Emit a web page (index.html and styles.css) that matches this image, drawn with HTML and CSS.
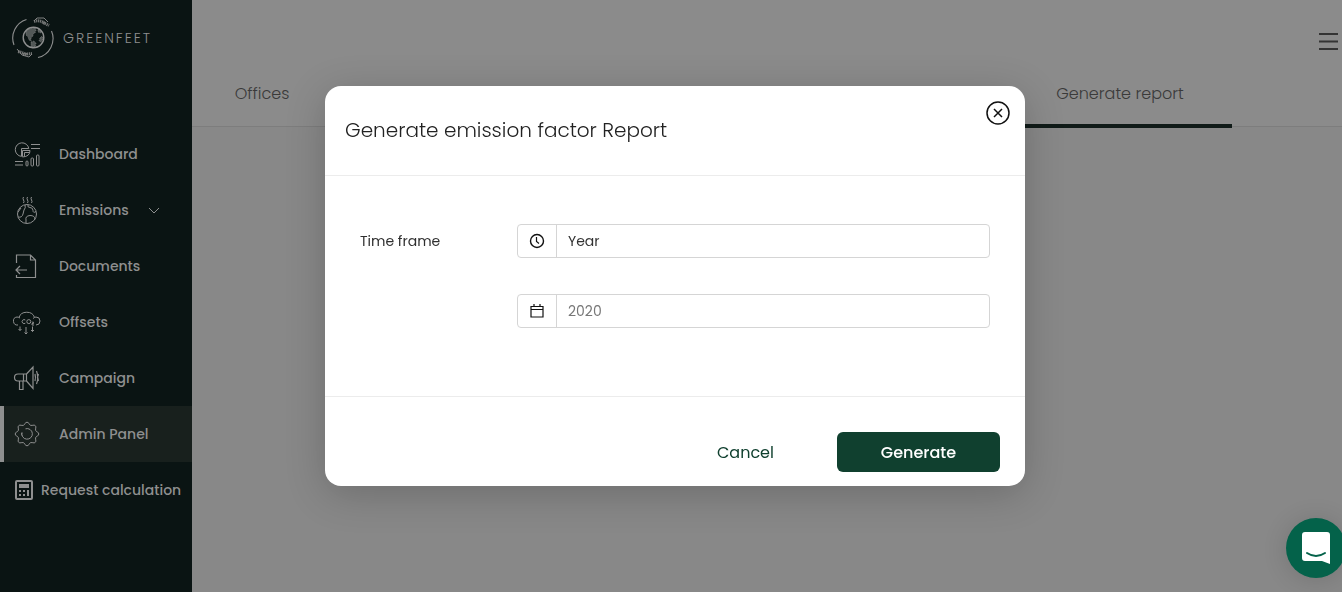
FILE: index.html
```
<!DOCTYPE html>
<html lang="en">
<head>
<meta charset="utf-8">
<title>Greenfeet</title>
<meta name="viewport" content="width=device-width, initial-scale=1">
<link rel="stylesheet" href="styles.css">
</head>
<body>
<div class="app">
  <aside class="sidebar">
    <a class="brand" href="#">
      <svg class="brand-mark" viewBox="0 0 42 42" width="42" height="42" fill="none" stroke="currentColor" stroke-width="1.1">
        <path d="M14.500 2.500A19.500 19.500 0 0 0 2 28"/>
        <path d="M39.500 14A19.500 19.500 0 0 1 26 40.500"/>
        <circle cx="21.500" cy="20.500" r="10.300" stroke-width="1.400"/>
        <path fill="currentColor" fill-opacity=".55" stroke-width=".6" stroke-dasharray="1 1" d="M14 14l3-2 6-1 1 2-1 3-2 1v2l-2 2v3l-2-1-1-3-2-2zM19 25l3-1 2 2-1 4-3 1-1-3zM28 21l2-2 1 3-2 3-2-1zM26 12l3 2v2l-3-1z"/>
        <path stroke-width="3" stroke-dasharray="1.300 .7" stroke-opacity=".8" d="M22 4.500q6-2 11 2M31 5.500l6 3M6 34.500q5 1 9 3.500M11 37.500l9-1"/>
        <path stroke-width=".9" d="M22 4l3-3 7 0 4 4M5 32l5 6 7 2 3-3"/>
      </svg>
      <span class="brand-name">GREENFEET</span>
    </a>
    <nav class="menu">
      <a class="item" href="#">
        <svg class="icon" viewBox="0 0 28 28" width="28" height="28">
          <path d="M8.500 16.400A6.800 6.800 0 1 1 15.800 8.500H8.500zM9.500 16.500v-6h7.500q0 6-7.500 6.500zM11.500 16.500V12.500h5M18 4.500h9M18 8.500h9M2 21.500h8M2 25h8"/>
          <rect x="13" y="21" width="2" height="5" rx="1"/><rect x="18" y="18" width="2.500" height="8" rx="1"/><rect x="23.500" y="15" width="2.500" height="11" rx="1"/>
        </svg>
        <span>Dashboard</span>
      </a>
      <a class="item" href="#">
        <svg class="icon" viewBox="0 0 28 28" width="28" height="28">
          <circle cx="14" cy="18" r="9.500"/>
          <path d="M10.500 1q-1 1.500 0 3t0 3M14.500 1q-1 1.500 0 3t0 3M18.500 1q-1 1.500 0 3t0 3M12 9q1 3-1 5l-1 4q-1 4-5 3M15 8.500q-1 3 2 3t3 3 3 1M13 27v-3q-1-4 4-4.500 5 0 5 4M5 16l3-4"/>
        </svg>
        <span>Emissions</span>
        <svg class="caret" viewBox="0 0 14 14" width="14" height="14"><path d="M2 5l5 5 5-5"/></svg>
      </a>
      <a class="item" href="#">
        <svg class="icon icon-strong" viewBox="0 0 28 28" width="28" height="28">
          <path d="M3.500 11V3h14l5 5v17.500h-19V23M17.500 3v5h5M14 18H3M7 14l-4 4 4 4"/>
        </svg>
        <span>Documents</span>
      </a>
      <a class="item" href="#">
        <svg class="icon" viewBox="0 0 28 28" width="28" height="28">
          <path d="M5 17a4 4 0 0 1-1-8q1.500 0 3 1M6 9.500a8 7 0 0 1 15.500 0M20 10.500q1.500-1.500 3-1.500a4 4 0 0 1 0 8M7 18.500v4M13 19v7M19.500 18.500v5M5.500 21l1.500 1.500L8.500 21M11.500 24.500l1.500 1.500 1.500-1.500M18 22l1.500 1.500 1.500-1.500"/>
          <path d="M12.300 12a2 2 0 1 0 0 3.200M19 14.200h1.500v1.300H19v1.500h2"/>
          <circle cx="15.800" cy="13.600" r="2"/>
        </svg>
        <span>Offsets</span>
      </a>
      <a class="item" href="#">
        <svg class="icon icon-strong" viewBox="0 0 28 28" width="28" height="28">
          <path d="M13.500 10H5q-3.500 0-3.500 3.500T5 17h8.500zM10.500 10v7M13.500 10l6.500-7v21.500L13.500 17M6.500 17v8.500h3.500V17M22 10q1 3.500 0 7M23.500 7q2.500 6.500 0 13M25.500 10q-2 3.500 0 7"/>
        </svg>
        <span>Campaign</span>
      </a>
      <a class="item item-active" href="#" aria-current="page">
        <svg class="icon" viewBox="0 0 28 28" width="28" height="28">
          <path d="M24.300 12a2.100 2.100 0 0 1 0 4a3 3 0 0 0-1.600 3.900a2.100 2.100 0 0 1-2.800 2.800a3 3 0 0 0-3.900 1.600a2.100 2.100 0 0 1-4 0a3 3 0 0 0-3.900-1.600a2.100 2.100 0 0 1-2.800-2.800a3 3 0 0 0-1.600-3.900a2.100 2.100 0 0 1 0-4a3 3 0 0 0 1.600-3.900a2.100 2.100 0 0 1 2.800-2.800a3 3 0 0 0 3.900-1.600a2.100 2.100 0 0 1 4 0a3 3 0 0 0 3.900 1.600a2.100 2.100 0 0 1 2.800 2.800a3 3 0 0 0 1.600 3.900z"/>
          <path d="M12.500 8.800a5.300 5.300 0 1 1-3.500 3.500M9 15.500q-.5-1-.2-2.500"/>
        </svg>
        <span>Admin Panel</span>
      </a>
      <a class="item item-wide" href="#">
        <svg class="calc" viewBox="0 0 18 20" width="18" height="20">
          <path fill="currentColor" fill-rule="evenodd" d="M2 0h14q2 0 2 2v16q0 2-2 2H2q-2 0-2-2V2Q0 0 2 0zM2 2v16h14V2zM4 4h10v4H4zM4 10h2v2H4zM8 10h2v2H8zM12 10h2v6h-2zM4 14h2v2H4zM8 14h2v2H8z"/>
        </svg>
        <span>Request calculation</span>
      </a>
    </nav>
  </aside>
  <main class="main">
    <header class="topbar">
      <button class="hamburger" type="button" aria-label="Open menu">
        <svg viewBox="0 0 19 18" width="19" height="18"><path d="M0 2h19M0 9.500h19M0 17h19"/></svg>
      </button>
    </header>
    <nav class="tabs">
      <a class="tab" href="#">Offices</a>
      <a class="tab tab-active" href="#" aria-current="page">Generate report</a>
    </nav>
  </main>
</div>

<div class="overlay">
  <form class="dialog" role="dialog" aria-modal="true" aria-labelledby="dialog-title">
    <header class="dialog-header">
      <h1 class="dialog-title" id="dialog-title">Generate emission factor Report</h1>
      <button class="close" type="button" aria-label="Close">
        <svg viewBox="0 0 24 24" width="24" height="24"><circle cx="12" cy="12" r="11"/><path d="M8 8l8 8M16 8l-8 8"/></svg>
      </button>
    </header>
    <div class="dialog-body">
      <label class="label" for="frame">Time frame</label>
      <div class="fields">
        <div class="field">
          <span class="addon">
            <svg viewBox="0 0 16 16" width="16" height="16"><circle cx="8" cy="8" r="6.500"/><path stroke-width="1.200" d="M7.500 4v4.500l2.500 2"/></svg>
          </span>
          <select class="control" id="frame"><option>Year</option></select>
        </div>
        <div class="field">
          <span class="addon">
            <svg viewBox="0 0 16 16" width="16" height="16"><path d="M2 3.500h12v10.500H2zM2 6.500h12M5 1v3M11 1v3" stroke-width="1.200"/></svg>
          </span>
          <input class="control" type="text" placeholder="2020" aria-label="Year value">
        </div>
      </div>
    </div>
    <footer class="dialog-footer">
      <button class="cancel" type="button">Cancel</button>
      <button class="submit" type="submit">Generate</button>
    </footer>
  </form>
</div>

<button class="chat" type="button" aria-label="Open chat">
  <svg viewBox="0 0 28 32" width="28" height="32">
    <path fill="#fff" d="M3 0h22q3 0 3 3v29l-8-3H3q-3 0-3-3V3q0-3 3-3z"/>
    <path fill="none" stroke="#04624a" stroke-width="2" stroke-linecap="round" d="M5 21q9 6 18 0"/>
  </svg>
</button>
</body>
</html>
```
FILE: styles.css
```
* { box-sizing: border-box; }

body {
  margin: 0;
  font-family: Poppins, Inter, "Open Sans", sans-serif;
  font-size: 14px;
  background: #888;
}

button, input, select { font: inherit; }
button { border: 0; padding: 0; background: none; cursor: pointer; }
a { color: inherit; text-decoration: none; }
svg { display: block; flex: none; }

.app { display: flex; min-height: 100vh; }

.sidebar {
  flex: none;
  width: 192px;
  background: #0a1413;
  color: #8e8f8f;
}

.brand {
  display: flex;
  align-items: center;
  gap: 9px;
  height: 76px;
  padding-left: 12px;
}
.brand-name { font-size: 14px; font-weight: 300; letter-spacing: 2px; }

.menu { padding-top: 50px; }
.item {
  display: flex;
  align-items: center;
  gap: 18px;
  height: 56px;
  padding-left: 13px;
  font-size: 14px;
  font-weight: 500;
  white-space: nowrap;
}
.item-active {
  border-left: 4px solid #8e8f8f;
  padding-left: 9px;
  background: #18201d;
}
.item-wide { gap: 8px; padding-left: 15px; }
.icon, .caret { fill: none; stroke: currentColor; stroke-width: 1; }
.icon-strong { stroke-width: 1.2; }

.main { flex: 1; min-width: 0; }
.topbar {
  display: flex;
  justify-content: flex-end;
  align-items: flex-end;
  height: 60px;
  padding: 0 4px 10px;
  background: #8b8b8b;
}
.hamburger svg { stroke: #343434; stroke-width: 2; }

.tabs {
  display: flex;
  justify-content: space-between;
  height: 67px;
  padding-right: 110px;
  background: #8b8b8b;
  border-bottom: 1px solid #7d7d7d;
  color: #3a3a3a;
  font-size: 16px;
  font-weight: 300;
}
.tab {
  width: 140px;
  height: 68px;
  padding-top: 24px;
  line-height: 20px;
  text-align: center;
}
.tab-active { width: 224px; border-bottom: 4px solid #101b18; }

.overlay {
  position: fixed;
  inset: 0;
  display: flex;
  justify-content: center;
  align-items: flex-start;
  padding: 86px 0 0 8px;
}
.dialog {
  width: 700px;
  border-radius: 16px;
  background: #fff;
  box-shadow: 0 8px 40px rgba(0, 0, 0, .2);
  color: #2f2f2f;
}
.dialog-header {
  display: flex;
  justify-content: space-between;
  align-items: flex-start;
  height: 90px;
  padding: 15px 15px 0 20px;
  border-bottom: 1px solid #ececec;
}
.dialog-title {
  margin: 15px 0 0;
  color: #222;
  font-size: 20px;
  font-weight: 300;
  line-height: 28px;
}
.close svg { fill: none; stroke: #111; stroke-width: 1.5; }

.dialog-body {
  display: flex;
  height: 221px;
  padding: 48px 35px 0;
  border-bottom: 1px solid #ececec;
}
.label { width: 157px; line-height: 34px; }
.fields { flex: 1; display: grid; gap: 36px; align-content: start; }
.field {
  display: flex;
  height: 34px;
  border: 1px solid #d5d5d5;
  border-radius: 4px;
}
.addon {
  display: flex;
  align-items: center;
  justify-content: center;
  width: 39px;
  border-right: 1px solid #d5d5d5;
}
.addon svg { fill: none; stroke: #111; stroke-width: 1.4; }
.control {
  flex: 1;
  min-width: 0;
  appearance: none;
  border: 0;
  padding: 0 11px;
  background: none;
  color: #333;
  outline: none;
}
.control::placeholder { color: #777; }

.dialog-footer {
  display: flex;
  justify-content: flex-end;
  align-items: center;
  height: 89px;
  padding: 21px 25px 0 0;
  font-size: 16px;
}
.cancel { width: 183px; height: 40px; color: #10402f; }
.submit {
  width: 163px;
  height: 40px;
  border-radius: 6px;
  background: #10402f;
  color: #fff;
  font-weight: 500;
}

.chat {
  position: fixed;
  right: -4px;
  bottom: 14px;
  display: flex;
  align-items: center;
  justify-content: center;
  width: 60px;
  height: 60px;
  border-radius: 50%;
  background: #04624a;
  box-shadow: 0 2px 24px rgba(0, 0, 0, .15);
}
```
